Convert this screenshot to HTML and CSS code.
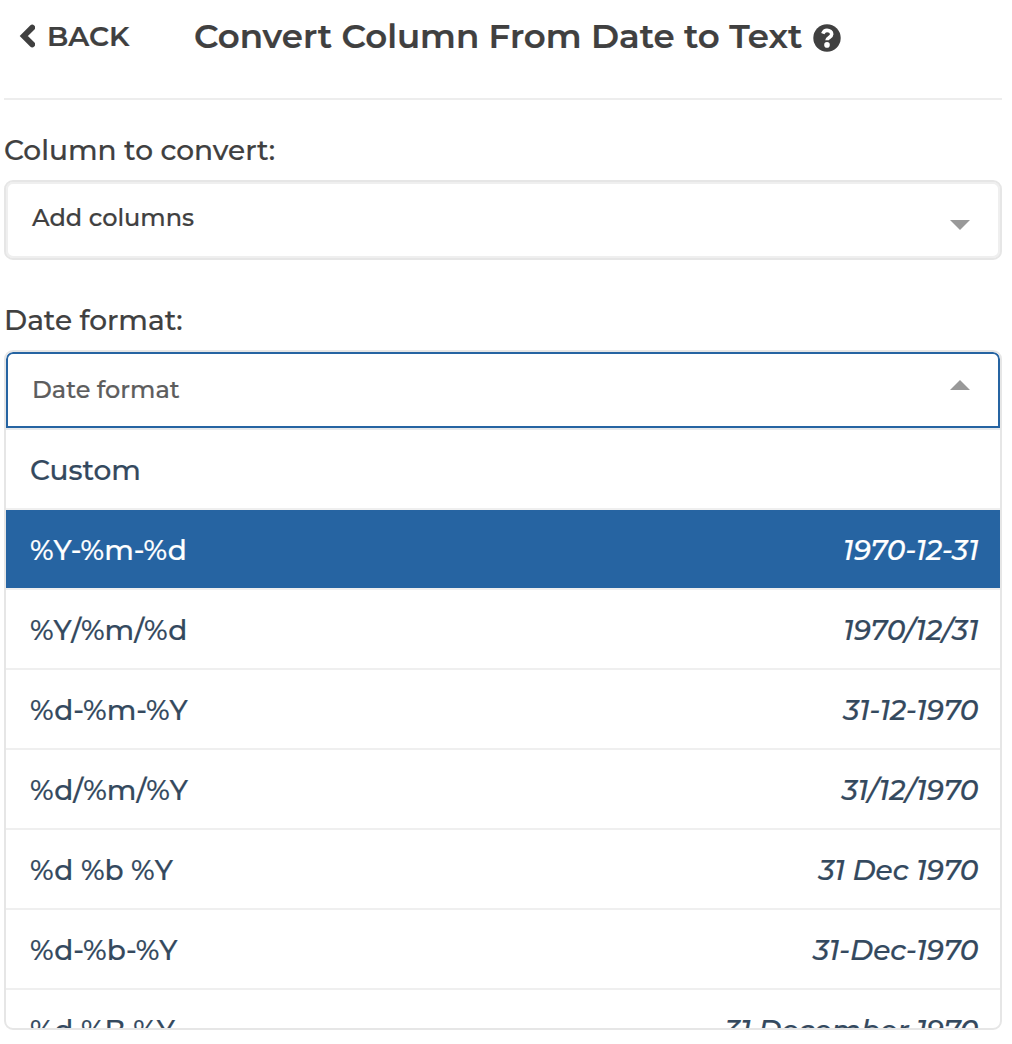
FILE: index.html
```html
<!DOCTYPE html>
<html lang="en">
<head>
<meta charset="utf-8">
<title>Convert Column From Date to Text</title>
<link rel="stylesheet" href="styles.css">
</head>
<body>
<header class="header">
  <a class="back"><svg class="chevron" viewBox="0 0 16 26"><path d="M13.2 4.6 4.8 13 13.2 21.4" fill="none" stroke="currentColor" stroke-width="5.8" stroke-linecap="round" stroke-linejoin="miter"/></svg><span class="back-text">BACK</span></a>
  <h1 class="title">Convert Column From Date to Text</h1>
  <svg class="help" viewBox="0 0 28 28"><circle cx="14" cy="14" r="13.7" fill="currentColor"/><path d="M9.8 9.6C10.8 7.2 12.2 6.4 14 6.4c2.8 0 4.7 1.6 4.7 3.9 0 3.1-4.7 3.2-4.7 6" fill="none" stroke="#fff" stroke-width="3.6"/><circle cx="14" cy="20.9" r="2.8" fill="#fff"/></svg>
</header>
<main class="form">
  <label class="label label-column">Column to convert:</label>
  <div class="select"><span class="select-text">Add columns</span><i class="arrow arrow-down"></i></div>
  <label class="label label-date">Date format:</label>
  <div class="dropdown">
    <div class="control"><span class="placeholder">Date format</span><i class="arrow arrow-up"></i></div>
    <ul class="options">
      <li class="option"><span>Custom</span></li>
      <li class="option selected"><span>%Y-%m-%d</span><em>1970-12-31</em></li>
      <li class="option"><span>%Y/%m/%d</span><em>1970/12/31</em></li>
      <li class="option"><span>%d-%m-%Y</span><em>31-12-1970</em></li>
      <li class="option"><span>%d/%m/%Y</span><em>31/12/1970</em></li>
      <li class="option"><span>%d %b %Y</span><em>31 Dec 1970</em></li>
      <li class="option"><span>%d-%b-%Y</span><em>31-Dec-1970</em></li>
      <li class="option"><span>%d %B %Y</span><em>31 December 1970</em></li>
    </ul>
  </div>
</main>
</body>
</html>
```
FILE: styles.css
```css
* { box-sizing: border-box; }
body { margin: 0; padding: 0 10px 0 4px; background: #fff; color: #404040; font-family: Montserrat, Inter, sans-serif; font-weight: 500; -webkit-text-stroke: 0.2px currentColor; }
.header { display: flex; height: 100px; border-bottom: 2px solid #ededed; padding-left: 15px; }
.back { display: flex; width: 175px; height: 71px; align-items: center; font-weight: 600; }
.chevron { width: 16px; height: 26px; margin-right: 12px; }
.back-text { font-size: 28px; }
.title { margin: 0; width: 619px; font-size: 34px; font-weight: 600; line-height: 72px; white-space: nowrap; }
.help { width: 28px; height: 28px; margin: 23.5px 0 0 0; }
.form { display: flex; flex-direction: column; }
.label { font-size: 28px; line-height: 40px; white-space: nowrap; }
.label-column { margin-top: 30px; }
.label-date { margin-top: 40px; }
.select { display: flex; justify-content: space-between; height: 80px; margin-top: 10px; padding: 0 27px 0 26px; border: 2px solid #e6e6e6; border-radius: 9px; box-shadow: inset 0 0 0 2px #efefef; font-size: 24px; line-height: 72px; }
.arrow { width: 0; height: 0; border: 10px solid transparent; }
.arrow-down { border-top-color: #999; border-bottom: 0; margin: 38px 3px 0 0; }
.arrow-up { border-bottom-color: #999; border-top: 0; margin: 26px 3px 0 0; }
.dropdown { height: 680px; margin-top: 10px; border: 2px solid #e6e6e6; border-radius: 9px; overflow: hidden; }
.control { display: flex; justify-content: space-between; height: 76px; padding: 0 25px 0 24px; border: 2px solid #2664a2; border-radius: 7px 7px 0 0; font-size: 24px; line-height: 72px; color: #5d5d5d; }
.options { list-style: none; margin: 0; padding: 0; border-top: 2px solid #e8eaec; }
.option { display: flex; justify-content: space-between; height: 80px; padding: 0 21.5px 0 24px; border-bottom: 2px solid #efefef; font-size: 28px; line-height: 80px; color: #34495e; white-space: pre; }
.selected { background: #2664a2; background-clip: padding-box; color: #fff; }
```
